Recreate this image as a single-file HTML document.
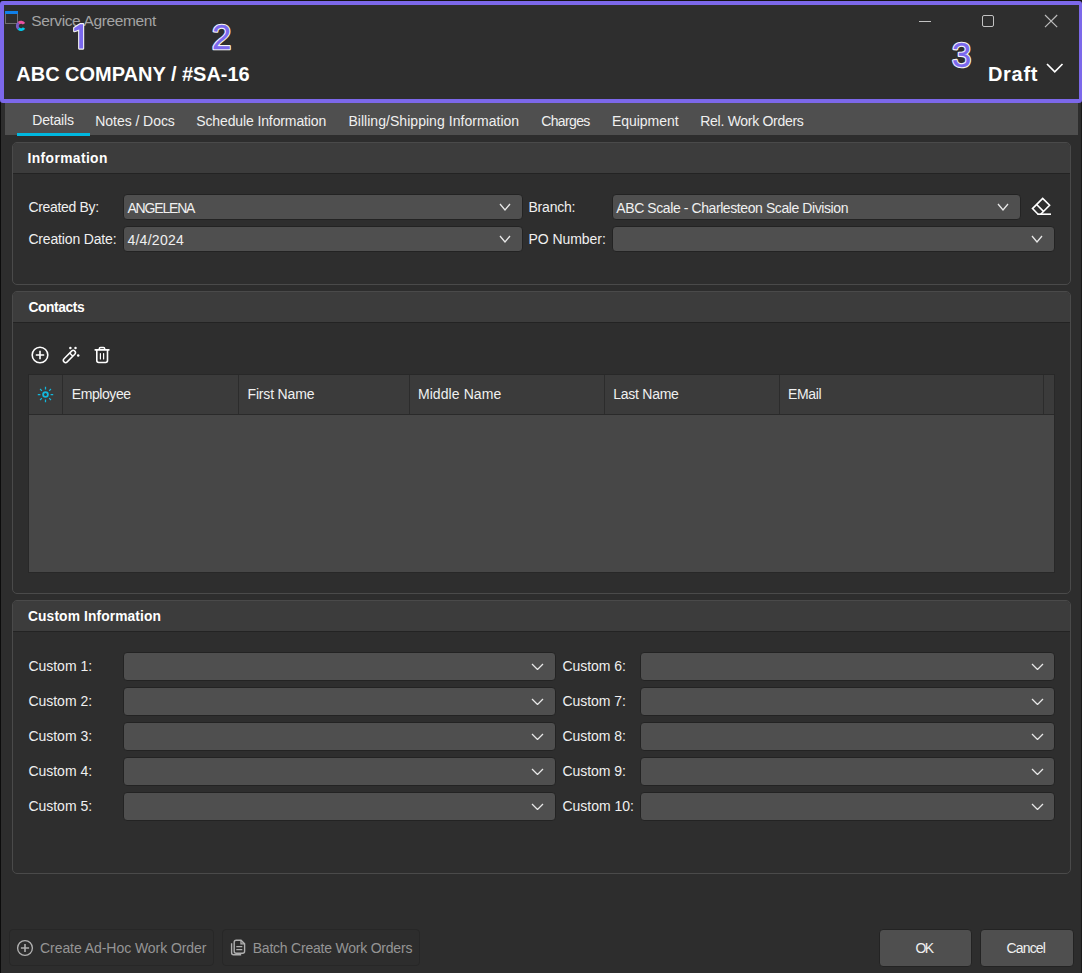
<!DOCTYPE html>
<html><head><meta charset="utf-8"><style>
*{box-sizing:border-box;margin:0;padding:0}
html,body{width:1082px;height:973px;overflow:hidden;background:#2d2d2d;font-family:"Liberation Sans",sans-serif;color:#f0f0f0}
.a{position:absolute}
.t{position:absolute;white-space:nowrap;line-height:normal}
.grp{position:absolute;left:12px;width:1059px;border:1px solid #4a4a4a;border-radius:5px;background:#2e2e2e;overflow:hidden}
.gh{position:absolute;left:0;top:0;right:0;background:#3c3c3c;border-bottom:1px solid #232323}
.cb{position:absolute;background:#4f4f4f;border-radius:4px}
</style></head><body>
<div class="a" style="left:0;top:0;width:1082px;height:1px;background:#141414"></div>
<div class="a" style="left:0;top:0;width:1px;height:973px;background:#0c0c0c"></div>
<div class="a" style="left:1081px;top:0;width:1px;height:973px;background:#1a1a1a"></div>
<div class="a" style="left:0;top:1px;width:1082px;height:102px;border:4px solid #7c68ea;border-right-width:3px;border-radius:3px;background:#2e2e2e"></div>
<svg class="a" style="left:0;top:0" width="30" height="34" viewBox="0 0 30 34">
<rect x="5.5" y="11.5" width="12" height="12" fill="none" stroke="#707070" stroke-width="1"/>
<rect x="5" y="11" width="13" height="3" fill="#1080e8"/>
<path d="M24.03 23.78 A3.7 3.7 0 0 0 18.62 23.07" fill="none" stroke="#ea52a0" stroke-width="2.9"/>
<path d="M18.62 23.07 A3.7 3.7 0 0 0 18.62 28.73" fill="none" stroke="#7a5cc4" stroke-width="2.9"/>
<path d="M18.62 28.73 A3.7 3.7 0 0 0 24.03 28.02" fill="none" stroke="#00c8ea" stroke-width="2.9"/>
</svg>
<div class="t" style="left:31.30px;top:11.97px;font-size:15.5px;color:#a4a4a4;font-weight:normal;letter-spacing:-0.375px">Service Agreement</div>
<div class="t" style="left:16.30px;top:62.90px;font-size:20px;color:#ffffff;font-weight:bold;letter-spacing:-0.016px">ABC COMPANY / #SA-16</div>
<div class="t" style="left:987.90px;top:62.90px;font-size:20px;color:#ffffff;font-weight:bold;letter-spacing:0.725px">Draft</div>
<svg class="a" style="left:1046px;top:63px" width="17.5" height="9.8" viewBox="-1 -1 17.5 9.8"><path d="M0 0 L7.75 7.8 L15.5 0" fill="none" stroke="#ffffff" stroke-width="1.7"/></svg>
<div class="a" style="left:919px;top:21px;width:12px;height:1px;background:#c2c2c2"></div>
<div class="a" style="left:982px;top:15px;width:12px;height:12px;border:1px solid #c2c2c2;border-radius:2px"></div>
<svg class="a" style="left:1044px;top:14px" width="14" height="14" viewBox="0 0 14 14"><path d="M1 1 L13.2 13.2 M13.2 1 L1 13.2" stroke="#bdbdbd" stroke-width="1.15"/></svg>
<svg class="a" style="left:0;top:0" width="100" height="60"><path d="M83.1 24.2 V48.6 H79.2 V29.6 L74.2 31.2 V28 L80.2 24.2 Z" fill="#7a68ee" stroke="#f4f4f4" stroke-width="2.2" paint-order="stroke" stroke-linejoin="round"/></svg>
<svg class="a" style="left:212.3px;top:9.299999999999997px;overflow:visible" width="40" height="46"><text x="0" y="40" font-family="Liberation Sans" font-size="34.5" fill="#ffffff" stroke="#f4f4f4" stroke-width="2.6" stroke-linejoin="round">2</text><text x="0" y="40" font-family="Liberation Sans" font-size="34.5" fill="#7a68ee" stroke="#7a68ee" stroke-width="0.3">2</text></svg>
<svg class="a" style="left:951.5px;top:26.900000000000006px;overflow:visible" width="40" height="46"><text x="0" y="40" font-family="Liberation Sans" font-size="34.5" fill="#ffffff" stroke="#f4f4f4" stroke-width="2.6" stroke-linejoin="round">3</text><text x="0" y="40" font-family="Liberation Sans" font-size="34.5" fill="#7a68ee" stroke="#7a68ee" stroke-width="0.3">3</text></svg>
<div class="a" style="left:5px;top:103px;width:1073px;height:32px;background:#4f4f4f"></div>
<div class="a" style="left:17px;top:133px;width:73px;height:3px;background:#00b8e0"></div>
<div class="t" style="left:32.30px;top:112.33px;font-size:14px;color:#f0f0f0;font-weight:normal;letter-spacing:-0.200px">Details</div>
<div class="t" style="left:95.30px;top:113.33px;font-size:14px;color:#f0f0f0;font-weight:normal;letter-spacing:-0.055px">Notes / Docs</div>
<div class="t" style="left:196.20px;top:113.33px;font-size:14px;color:#f0f0f0;font-weight:normal;letter-spacing:-0.116px">Schedule Information</div>
<div class="t" style="left:348.40px;top:113.33px;font-size:14px;color:#f0f0f0;font-weight:normal;letter-spacing:0.041px">Billing/Shipping Information</div>
<div class="t" style="left:541.20px;top:113.33px;font-size:14px;color:#f0f0f0;font-weight:normal;letter-spacing:-0.633px">Charges</div>
<div class="t" style="left:612.00px;top:113.33px;font-size:14px;color:#f0f0f0;font-weight:normal;letter-spacing:-0.050px">Equipment</div>
<div class="t" style="left:700.30px;top:113.33px;font-size:14px;color:#f0f0f0;font-weight:normal;letter-spacing:-0.287px">Rel. Work Orders</div>
<div class="grp" style="top:142px;height:143px"><div class="gh" style="height:31px"></div></div>
<div class="t" style="left:27.50px;top:150.51px;font-size:13.8px;color:#ffffff;font-weight:bold;letter-spacing:0.400px">Information</div>
<div class="t" style="left:28.40px;top:199.33px;font-size:14px;color:#f0f0f0;font-weight:normal;letter-spacing:-0.320px">Created By:</div>
<div class="t" style="left:28.40px;top:231.33px;font-size:14px;color:#f0f0f0;font-weight:normal;letter-spacing:-0.162px">Creation Date:</div>
<div class="t" style="left:528.50px;top:199.33px;font-size:14px;color:#f0f0f0;font-weight:normal;letter-spacing:-0.217px">Branch:</div>
<div class="t" style="left:528.50px;top:231.33px;font-size:14px;color:#f0f0f0;font-weight:normal;letter-spacing:-0.056px">PO Number:</div>
<div class="cb" style="left:123px;top:194px;width:400px;height:26px;border:1px solid #232323"></div>
<div class="cb" style="left:123px;top:226px;width:400px;height:26px;border:1px solid #232323"></div>
<div class="cb" style="left:612px;top:194px;width:409px;height:26px;border:1px solid #232323"></div>
<div class="cb" style="left:612px;top:226px;width:443px;height:26px;border:1px solid #232323"></div>
<div class="t" style="left:127.40px;top:200.33px;font-size:14px;color:#f0f0f0;font-weight:normal;letter-spacing:-1.171px">ANGELENA</div>
<div class="t" style="left:127.40px;top:232.33px;font-size:14px;color:#f0f0f0;font-weight:normal;letter-spacing:0.271px">4/4/2024</div>
<div class="t" style="left:616.30px;top:200.33px;font-size:14px;color:#f0f0f0;font-weight:normal;letter-spacing:-0.414px">ABC Scale - Charlesteon Scale Division</div>
<svg class="a" style="left:499px;top:203px" width="12" height="8" viewBox="-1 -1 12 8"><path d="M0 0 L5.0 6 L10 0" fill="none" stroke="#e8e8e8" stroke-width="1.3"/></svg>
<svg class="a" style="left:499px;top:235px" width="12" height="8" viewBox="-1 -1 12 8"><path d="M0 0 L5.0 6 L10 0" fill="none" stroke="#e8e8e8" stroke-width="1.3"/></svg>
<svg class="a" style="left:997px;top:203px" width="12" height="8" viewBox="-1 -1 12 8"><path d="M0 0 L5.0 6 L10 0" fill="none" stroke="#e8e8e8" stroke-width="1.3"/></svg>
<svg class="a" style="left:1031px;top:235px" width="12" height="8" viewBox="-1 -1 12 8"><path d="M0 0 L5.0 6 L10 0" fill="none" stroke="#e8e8e8" stroke-width="1.3"/></svg>
<svg class="a" style="left:0;top:0;overflow:visible" width="1" height="1">
<path d="M1038.1 214.2 L1032.5 208.6 L1042.7 198.4 L1049.6 205.3 L1040.7 214.2" fill="none" stroke="#fff" stroke-width="1.6" stroke-linejoin="miter"/>
<path d="M1036.6 204.5 L1043.5 211.4" stroke="#fff" stroke-width="1.6"/>
<path d="M1037.3 214.2 H1051" stroke="#fff" stroke-width="1.6"/>
</svg>
<div class="grp" style="top:291px;height:303px"><div class="gh" style="height:31px"></div></div>
<div class="t" style="left:28.50px;top:299.51px;font-size:13.8px;color:#ffffff;font-weight:bold;letter-spacing:-0.400px">Contacts</div>
<svg class="a" style="left:30px;top:345px" width="20" height="20" viewBox="0 0 20 20">
<circle cx="10" cy="10" r="7.8" fill="none" stroke="#fff" stroke-width="1.6"/>
<path d="M10 5.8 V14.2 M5.8 10 H14.2" stroke="#fff" stroke-width="1.6"/></svg>
<svg class="a" style="left:0;top:0;overflow:visible" width="1" height="1">
<g transform="translate(69.4 356.5) rotate(-45)"><rect x="-7.6" y="-2.25" width="15.2" height="4.5" rx="2.25" fill="none" stroke="#fff" stroke-width="1.45"/>
<path d="M2.6 -2.25 V2.25" stroke="#fff" stroke-width="1.45"/></g>
<circle cx="70.4" cy="347.9" r="1.25" fill="#fff"/><circle cx="75.5" cy="347.9" r="1.25" fill="#fff"/><circle cx="78.2" cy="355.5" r="1.25" fill="#fff"/></svg>
<svg class="a" style="left:0;top:0;overflow:visible" width="1" height="1">
<path d="M95.2 349.9 H108.9" stroke="#fff" stroke-width="1.6" stroke-linecap="round"/>
<path d="M99.3 349.9 V348.8 Q99.3 347.5 100.6 347.5 H103.4 Q104.7 347.5 104.7 348.8 V349.9" fill="none" stroke="#fff" stroke-width="1.5"/>
<path d="M96.8 350 V360.6 Q96.8 362.5 98.7 362.5 H105.6 Q107.5 362.5 107.5 360.6 V350" fill="none" stroke="#fff" stroke-width="1.6"/>
<path d="M100.4 353.6 V359 M103.6 353.6 V359" stroke="#fff" stroke-width="1.2" stroke-linecap="round"/></svg>
<div class="a" style="left:28px;top:374px;width:1027px;height:199px;background:#474747;border:1px solid #282828"></div>
<div class="a" style="left:29px;top:375px;width:1025px;height:40px;background:#3b3b3b;border-bottom:1px solid #2a2a2a"></div>
<div class="a" style="left:62px;top:375px;width:1px;height:39px;background:#2c2c2c"></div>
<div class="a" style="left:238px;top:375px;width:1px;height:39px;background:#2c2c2c"></div>
<div class="a" style="left:409px;top:375px;width:1px;height:39px;background:#2c2c2c"></div>
<div class="a" style="left:604px;top:375px;width:1px;height:39px;background:#2c2c2c"></div>
<div class="a" style="left:779px;top:375px;width:1px;height:39px;background:#2c2c2c"></div>
<div class="a" style="left:1043px;top:375px;width:1px;height:39px;background:#2c2c2c"></div>
<svg class="a" style="left:0;top:0;overflow:visible" width="1" height="1">
<circle cx="45.5" cy="394.5" r="2.4" fill="none" stroke="#12b8dc" stroke-width="1.8"/>
<path d="M50.60 394.50 L53.20 394.50 M49.11 398.11 L50.94 399.94 M45.50 399.60 L45.50 402.20 M41.89 398.11 L40.06 399.94 M40.40 394.50 L37.80 394.50 M41.89 390.89 L40.06 389.06 M45.50 389.40 L45.50 386.80 M49.11 390.89 L50.94 389.06" stroke="#12b8dc" stroke-width="1.25" stroke-linecap="butt"/></svg>
<div class="t" style="left:71.70px;top:386.33px;font-size:14px;color:#f0f0f0;font-weight:normal;letter-spacing:-0.400px">Employee</div>
<div class="t" style="left:247.50px;top:386.33px;font-size:14px;color:#f0f0f0;font-weight:normal;letter-spacing:-0.167px">First Name</div>
<div class="t" style="left:417.90px;top:386.33px;font-size:14px;color:#f0f0f0;font-weight:normal;letter-spacing:0.090px">Middle Name</div>
<div class="t" style="left:613.30px;top:386.33px;font-size:14px;color:#f0f0f0;font-weight:normal;letter-spacing:-0.262px">Last Name</div>
<div class="t" style="left:787.90px;top:386.33px;font-size:14px;color:#f0f0f0;font-weight:normal;letter-spacing:-0.300px">EMail</div>
<div class="grp" style="top:600px;height:274px"><div class="gh" style="height:31px"></div></div>
<div class="t" style="left:28.00px;top:608.51px;font-size:13.8px;color:#ffffff;font-weight:bold;letter-spacing:0.112px">Custom Information</div>
<div class="t" style="left:28.40px;top:658.33px;font-size:14px;color:#f0f0f0;font-weight:normal;letter-spacing:-0.013px">Custom 1:</div>
<div class="cb" style="left:123px;top:652px;width:433px;height:29px;border:1px solid #232323"></div>
<svg class="a" style="left:531px;top:662.5px" width="13" height="7.5" viewBox="-1 -1 13 7.5"><path d="M0 0 L5.5 5.5 L11 0" fill="none" stroke="#e8e8e8" stroke-width="1.3"/></svg>
<div class="t" style="left:562.50px;top:658.33px;font-size:14px;color:#f0f0f0;font-weight:normal;letter-spacing:-0.062px">Custom 6:</div>
<div class="cb" style="left:640px;top:652px;width:415px;height:29px;border:1px solid #232323"></div>
<svg class="a" style="left:1030.5px;top:662.5px" width="13" height="7.5" viewBox="-1 -1 13 7.5"><path d="M0 0 L5.5 5.5 L11 0" fill="none" stroke="#e8e8e8" stroke-width="1.3"/></svg>
<div class="t" style="left:28.40px;top:693.33px;font-size:14px;color:#f0f0f0;font-weight:normal;letter-spacing:-0.013px">Custom 2:</div>
<div class="cb" style="left:123px;top:687px;width:433px;height:29px;border:1px solid #232323"></div>
<svg class="a" style="left:531px;top:697.5px" width="13" height="7.5" viewBox="-1 -1 13 7.5"><path d="M0 0 L5.5 5.5 L11 0" fill="none" stroke="#e8e8e8" stroke-width="1.3"/></svg>
<div class="t" style="left:562.50px;top:693.33px;font-size:14px;color:#f0f0f0;font-weight:normal;letter-spacing:-0.062px">Custom 7:</div>
<div class="cb" style="left:640px;top:687px;width:415px;height:29px;border:1px solid #232323"></div>
<svg class="a" style="left:1030.5px;top:697.5px" width="13" height="7.5" viewBox="-1 -1 13 7.5"><path d="M0 0 L5.5 5.5 L11 0" fill="none" stroke="#e8e8e8" stroke-width="1.3"/></svg>
<div class="t" style="left:28.40px;top:728.33px;font-size:14px;color:#f0f0f0;font-weight:normal;letter-spacing:-0.013px">Custom 3:</div>
<div class="cb" style="left:123px;top:722px;width:433px;height:29px;border:1px solid #232323"></div>
<svg class="a" style="left:531px;top:732.5px" width="13" height="7.5" viewBox="-1 -1 13 7.5"><path d="M0 0 L5.5 5.5 L11 0" fill="none" stroke="#e8e8e8" stroke-width="1.3"/></svg>
<div class="t" style="left:562.50px;top:728.33px;font-size:14px;color:#f0f0f0;font-weight:normal;letter-spacing:-0.062px">Custom 8:</div>
<div class="cb" style="left:640px;top:722px;width:415px;height:29px;border:1px solid #232323"></div>
<svg class="a" style="left:1030.5px;top:732.5px" width="13" height="7.5" viewBox="-1 -1 13 7.5"><path d="M0 0 L5.5 5.5 L11 0" fill="none" stroke="#e8e8e8" stroke-width="1.3"/></svg>
<div class="t" style="left:28.40px;top:763.33px;font-size:14px;color:#f0f0f0;font-weight:normal;letter-spacing:-0.013px">Custom 4:</div>
<div class="cb" style="left:123px;top:757px;width:433px;height:29px;border:1px solid #232323"></div>
<svg class="a" style="left:531px;top:767.5px" width="13" height="7.5" viewBox="-1 -1 13 7.5"><path d="M0 0 L5.5 5.5 L11 0" fill="none" stroke="#e8e8e8" stroke-width="1.3"/></svg>
<div class="t" style="left:562.50px;top:763.33px;font-size:14px;color:#f0f0f0;font-weight:normal;letter-spacing:-0.062px">Custom 9:</div>
<div class="cb" style="left:640px;top:757px;width:415px;height:29px;border:1px solid #232323"></div>
<svg class="a" style="left:1030.5px;top:767.5px" width="13" height="7.5" viewBox="-1 -1 13 7.5"><path d="M0 0 L5.5 5.5 L11 0" fill="none" stroke="#e8e8e8" stroke-width="1.3"/></svg>
<div class="t" style="left:28.40px;top:798.33px;font-size:14px;color:#f0f0f0;font-weight:normal;letter-spacing:-0.013px">Custom 5:</div>
<div class="cb" style="left:123px;top:792px;width:433px;height:29px;border:1px solid #232323"></div>
<svg class="a" style="left:531px;top:802.5px" width="13" height="7.5" viewBox="-1 -1 13 7.5"><path d="M0 0 L5.5 5.5 L11 0" fill="none" stroke="#e8e8e8" stroke-width="1.3"/></svg>
<div class="t" style="left:562.50px;top:798.33px;font-size:14px;color:#f0f0f0;font-weight:normal;letter-spacing:-0.033px">Custom 10:</div>
<div class="cb" style="left:640px;top:792px;width:415px;height:29px;border:1px solid #232323"></div>
<svg class="a" style="left:1030.5px;top:802.5px" width="13" height="7.5" viewBox="-1 -1 13 7.5"><path d="M0 0 L5.5 5.5 L11 0" fill="none" stroke="#e8e8e8" stroke-width="1.3"/></svg>
<div class="a" style="left:9px;top:929px;width:205px;height:37px;border:1px solid #272727;border-radius:4px;background:#2d2d2d"></div>
<div class="a" style="left:222px;top:929px;width:198px;height:37px;border:1px solid #272727;border-radius:4px;background:#2d2d2d"></div>
<svg class="a" style="left:0;top:0;overflow:visible" width="1" height="1">
<circle cx="25" cy="948" r="7.4" fill="none" stroke="#b0b0b0" stroke-width="1.35"/>
<path d="M25 943.9 V952.1 M20.9 948 H29.1" stroke="#b0b0b0" stroke-width="1.6"/>
<path d="M236.2 940.3 H241 L244.6 943.9 V951.2 Q244.6 953.2 242.6 953.2 H236.2 Q234.2 953.2 234.2 951.2 V942.3 Q234.2 940.3 236.2 940.3 Z" fill="none" stroke="#b0b0b0" stroke-width="1.4"/>
<path d="M241 940.3 V943.9 H244.6" fill="none" stroke="#b0b0b0" stroke-width="1.3"/>
<path d="M236.8 946.7 H241.8 M236.8 949.7 H241.8" stroke="#b0b0b0" stroke-width="1.3" stroke-linecap="round"/>
<path d="M231.6 943.2 V952.8 Q231.6 954.8 233.6 954.8 H241.2" fill="none" stroke="#b0b0b0" stroke-width="1.4"/>
</svg>
<div class="t" style="left:40.00px;top:940.33px;font-size:14px;color:#959595;font-weight:normal;letter-spacing:-0.057px">Create Ad-Hoc Work Order</div>
<div class="t" style="left:252.70px;top:940.33px;font-size:14px;color:#959595;font-weight:normal;letter-spacing:-0.217px">Batch Create Work Orders</div>
<div class="a" style="left:879px;top:929px;width:93px;height:38px;background:#4f4f4f;border-radius:4px;border:1px solid #232323"></div>
<div class="a" style="left:980px;top:929px;width:94px;height:38px;background:#4f4f4f;border-radius:4px;border:1px solid #232323"></div>
<div class="t" style="left:915.40px;top:940.33px;font-size:14px;color:#f0f0f0;font-weight:normal;letter-spacing:-1.500px">OK</div>
<div class="t" style="left:1006.60px;top:940.33px;font-size:14px;color:#f0f0f0;font-weight:normal;letter-spacing:-0.860px">Cancel</div>
</body></html>
